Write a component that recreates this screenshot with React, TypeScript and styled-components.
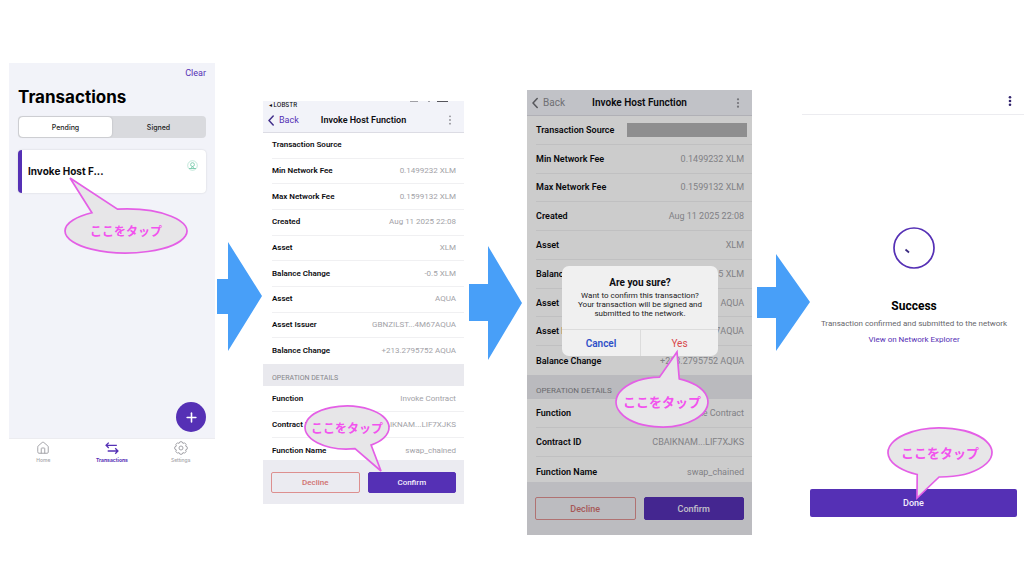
import React from "react";
import styled, { createGlobalStyle, css } from "styled-components";
import { House, Plus } from "lucide-react";

const purple = "#5530b5";
const ink = "#0c0c10";
const muted = "#a2a2a7";
const pink = "#e45fe6";

const GlobalStyle = createGlobalStyle`
  * { box-sizing: border-box; }
  body { margin: 0; background: #fff; color: ${ink}; font-family: Roboto, "Noto Sans CJK JP", sans-serif; }
  button { font: inherit; margin: 0; padding: 0; border: 0; background: none; color: inherit; white-space: nowrap; }
  a { color: inherit; text-decoration: none; }
  h1, h2, p, dl, dd, dt { margin: 0; }
  svg { display: block; }
`;

const Page = styled.main`
  display: grid;
  grid-template-columns:
    minmax(0, 206fr) minmax(0, 48fr) minmax(0, 201fr) minmax(0, 63fr)
    minmax(0, 225fr) minmax(0, 50fr) minmax(0, 222fr);
  align-items: start;
  min-height: 100vh;
  padding-left: 9px;
  overflow: hidden;
`;

const Screen = styled.section<{ $top: number }>`
  position: relative;
  display: flex;
  flex-direction: column;
  margin-top: ${(p) => p.$top}px;
`;

/* Arrows between the steps */
const ArrowSlot = styled.div<{ $top: number; $start: number }>`
  margin-top: ${(p) => p.$top}px;
  padding-left: ${(p) => p.$start}px;
`;

type ArrowProps = { top: number; start: number; w: number; h: number; neck: number; a: number; b: number; tip: number };
const Arrow = ({ top, start, w, h, neck, a, b, tip }: ArrowProps) => (
  <ArrowSlot $top={top} $start={start} aria-hidden="true">
    <svg width={w} height={h} overflow="visible">
      <path d={`M0 ${a}H${neck}V0L${w} ${tip}L${neck} ${h}V${b}H0Z`} fill="#489ff8" />
    </svg>
  </ArrowSlot>
);

/* Speech bubbles */
const CalloutBox = styled.div<{ $x: number; $y: number; $w: number; $h: number; $size: number }>`
  position: absolute;
  z-index: 3;
  left: ${(p) => p.$x}px;
  top: ${(p) => p.$y}px;
  width: ${(p) => p.$w}px;
  height: ${(p) => p.$h}px;
  display: flex;
  align-items: center;
  justify-content: center;
  font-family: "Noto Sans CJK JP", sans-serif;
  font-size: ${(p) => p.$size}px;
  font-weight: 700;
  line-height: 16px;
  color: #f253ee;
  white-space: nowrap;
  svg { position: absolute; left: 0; top: 0; overflow: visible; }
  span { position: relative; }
`;

/* The tail leaves the ellipse between two angles, given in degrees clockwise from the right. */
type CalloutProps = {
  x: number; y: number; w: number; h: number; size: number;
  open: [number, number];
  tip: [number, number];
};
const Callout = ({ x, y, w, h, size, open, tip }: CalloutProps) => {
  const rx = w / 2;
  const ry = h / 2;
  const at = (deg: number) => {
    const t = (deg * Math.PI) / 180;
    return `${(rx + rx * Math.cos(t)).toFixed(2)} ${(ry + ry * Math.sin(t)).toFixed(2)}`;
  };
  return (
    <CalloutBox $x={x} $y={y} $w={w} $h={h} $size={size}>
      <svg width={w} height={h} aria-hidden="true">
        <path
          d={`M${at(open[1])} A${rx} ${ry} 0 1 1 ${at(open[0])} L${tip[0]} ${tip[1]}Z`}
          fill="#e7e6e8"
          stroke={pink}
          strokeWidth="1.7"
        />
      </svg>
      <span>ここをタップ</span>
    </CalloutBox>
  );
};

/* Transactions list screen */
const ListBody = styled.div`
  display: flex;
  flex-direction: column;
  height: 375px;
  padding: 4px 9px 6px;
  background: #f2f3f9;
`;

const ClearButton = styled.button`
  align-self: flex-end;
  font-size: 9px;
  line-height: 12px;
  color: ${purple};
`;

const PageTitle = styled.h1`
  margin-top: 7px;
  font-family: Inter, sans-serif;
  font-size: 17px;
  line-height: 22px;
  font-weight: 700;
  color: #000;
`;

const Segments = styled.div`
  display: grid;
  grid-template-columns: 1fr 1fr;
  margin-top: 8px;
  height: 22px;
  padding: 1px;
  border-radius: 4px;
  background: #d9dade;
`;

const Segment = styled.button<{ $on?: boolean }>`
  font-family: Inter, sans-serif;
  font-size: 7px;
  font-weight: 500;
  border-radius: 4px;
  color: #222;
  ${(p) => p.$on && css`background: #fff; box-shadow: 0 0 2px rgba(0, 0, 0, 0.2);`}
`;

const Card = styled.a`
  display: flex;
  justify-content: space-between;
  margin-top: 12px;
  height: 43px;
  padding: 0 8px 0 6px;
  border-left: 4px solid ${purple};
  border-radius: 4px;
  background: #fff;
  box-shadow: 0 0 2px rgba(0, 0, 0, 0.15);
  font-family: Inter, sans-serif;
  font-size: 10px;
  line-height: 43px;
  font-weight: 700;
  svg { margin-top: 10px; }
`;

const AddButton = styled.button`
  display: grid;
  place-items: center;
  align-self: flex-end;
  margin-top: auto;
  width: 30px;
  height: 30px;
  border-radius: 50%;
  background: ${purple};
  color: #fff;
`;

const TabBar = styled.nav`
  display: grid;
  grid-template-columns: repeat(3, 1fr);
  border-top: 1px solid #ececf0;
  padding-top: 2px;
`;

const Tab = styled.a<{ $on?: boolean }>`
  display: flex;
  flex-direction: column;
  align-items: center;
  gap: 1px;
  font-family: Inter, sans-serif;
  font-size: 5px;
  line-height: 8px;
  font-weight: ${(p) => (p.$on ? 700 : 500)};
  color: ${(p) => (p.$on ? purple : "#a4a4a9")};
`;

/* Detail screens */
const StatusLine = styled.div`
  display: flex;
  justify-content: space-between;
  height: 7px;
  padding: 0 15px 0 6px;
  background: #f2f3f9;
  font-family: Inter, sans-serif;
  font-size: 6px;
  line-height: 7px;
  font-weight: 500;
`;

const NavBar = styled.header<{ $h: number }>`
  display: grid;
  grid-template-columns: 1fr auto 1fr;
  align-items: center;
  height: ${(p) => p.$h}px;
  padding: 0 5px;
  border-bottom: 1px solid #dcdce4;
  background: #f2f3f9;
`;

const NavTitle = styled.h2<{ $size: number }>`
  font-size: ${(p) => p.$size}px;
  line-height: 12px;
  font-weight: 600;
  white-space: nowrap;
`;

const BackButton = styled.button<{ $size: number; $dim?: boolean }>`
  display: flex;
  align-items: center;
  justify-self: start;
  gap: 5px;
  font-size: ${(p) => p.$size}px;
  line-height: 12px;
  color: ${(p) => (p.$dim ? "#8c8c92" : purple)};
  svg { color: ${(p) => (p.$dim ? "#6c6c72" : "#43308c")}; }
`;

const MoreButton = styled.button<{ $color: string }>`
  justify-self: end;
  margin-right: 7px;
  color: ${(p) => p.$color};
`;

const Rows = styled.dl<{ $h: number; $row?: number; $size: number }>`
  display: grid;
  grid-auto-rows: ${(p) => (p.$row ? `${p.$row}px` : "1fr")};
  height: ${(p) => p.$h}px;
  overflow: hidden;
  padding-left: 9px;
  background: #fff;
  font-size: ${(p) => p.$size}px;
`;

const Row = styled.div`
  display: flex;
  align-items: center;
  justify-content: space-between;
  padding-right: 8px;
  border-bottom: 1px solid #f0f0f2;
  line-height: 12px;
  white-space: nowrap;
  &:last-child { border-bottom: 0; }
  dt { font-weight: 600; }
  dd { color: ${muted}; }
`;

const Redacted = styled.dd`
  width: 120px;
  height: 14px;
  margin-right: -3px;
  background: #b2b2b3;
`;

const GroupTitle = styled.h2<{ $h: number; $size: number }>`
  height: ${(p) => p.$h}px;
  padding: ${(p) => p.$h - 14}px 9px 0;
  background: #e9e9ee;
  font-size: ${(p) => p.$size}px;
  line-height: 12px;
  font-weight: 400;
  color: #85858a;
`;

const Footer = styled.footer<{ $h: number; $top: number }>`
  display: grid;
  grid-template-columns: 1fr 1fr;
  align-items: start;
  gap: 8px;
  height: ${(p) => p.$h}px;
  padding: ${(p) => p.$top}px 8px 0;
  background: #ebebf1;
`;

const Action = styled.button<{ $h: number; $size: number; $primary?: boolean }>`
  height: ${(p) => p.$h}px;
  border: 1px solid ${(p) => (p.$primary ? purple : "#dd8f8f")};
  border-radius: 2px;
  background: ${(p) => (p.$primary ? purple : "transparent")};
  color: ${(p) => (p.$primary ? "#f3effc" : "#d0706f")};
  font-size: ${(p) => p.$size}px;
  font-weight: 500;
`;

const Shade = styled.div`
  position: absolute;
  z-index: 1;
  inset: 0;
  background: rgba(0, 0, 0, 0.2);
`;

const Alert = styled.div`
  position: absolute;
  z-index: 2;
  left: 35px;
  right: 34px;
  top: 176px;
  border-radius: 7px;
  background: #f0f0f0;
  text-align: center;
  overflow: hidden;
  h2 { padding-top: 11px; font-size: 10px; line-height: 12px; font-weight: 700; }
  p { padding: 2px 0 11px; font-size: 8px; line-height: 9px; white-space: pre-line; color: #222; }
`;

const AlertActions = styled.div`
  display: grid;
  grid-template-columns: 1fr 1fr;
  border-top: 1px solid #dcdcdc;
`;

const AlertButton = styled.button<{ $color: string; $weight: number }>`
  height: 26px;
  font-size: 10px;
  font-weight: ${(p) => p.$weight};
  color: ${(p) => p.$color};
  & + & { border-left: 1px solid #dcdcdc; }
`;

/* Success screen */
const PlainBar = styled.header`
  display: flex;
  align-items: center;
  justify-content: flex-end;
  height: 27px;
  padding-right: 5px;
  border-bottom: 1px solid #ececf0;
`;

const Result = styled.div`
  display: flex;
  flex-direction: column;
  align-items: center;
  padding: 112px 0 0 2px;
  text-align: center;
  h2 { margin-top: 29px; font-size: 12px; line-height: 16px; font-weight: 700; color: #000; }
  p { margin-top: 4px; font-size: 8px; line-height: 12px; color: #66666b; white-space: nowrap; }
  a { margin-top: 4px; font-size: 8px; line-height: 12px; color: ${purple}; }
`;

const DoneButton = styled.button`
  margin: 143px 7px 0 8px;
  height: 28px;
  border-radius: 2px;
  background: ${purple};
  color: #f3effc;
  font-size: 9px;
  font-weight: 500;
`;

const Dots = ({ r = 0.9 }: { r?: number }) => (
  <svg width="4" height="12" viewBox="0 0 4 12" fill="currentColor" aria-hidden="true">
    <circle cx="2" cy="2.3" r={r} />
    <circle cx="2" cy="6" r={r} />
    <circle cx="2" cy="9.7" r={r} />
  </svg>
);

const BackIcon = ({ height }: { height: number }) => (
  <svg width="6" height={height} viewBox="0 0 6 11" fill="none" stroke="currentColor" strokeWidth="1.5" strokeLinecap="round" strokeLinejoin="round" aria-hidden="true">
    <path d="M5.2 1L1 5.5L5.2 10" />
  </svg>
);

const TransferIcon = () => (
  <svg width="14" height="14" viewBox="0 0 13 13" fill="none" stroke="currentColor" strokeWidth="1.2" aria-hidden="true">
    <path d="M3.5 1.5L1 4L3.5 6.5M1 4H11M9.5 6.8L12 9.3L9.5 11.8M12 9.3H2.5" />
  </svg>
);

/* A round gear with eight shallow teeth */
const gearPath =
  Array.from({ length: 8 }, (_, i) => {
    const point = (step: number, r: number) => {
      const t = ((i + step) * Math.PI) / 4;
      return `${(7 + r * Math.cos(t)).toFixed(2)} ${(7 + r * Math.sin(t)).toFixed(2)}`;
    };
    return `${i === 0 ? "M" : "L"}${point(-0.22, 6.3)}L${point(0.22, 6.3)}L${point(0.5, 5)}`;
  }).join("") + "Z";

const GearIcon = () => (
  <svg width="14" height="14" viewBox="0 0 14 14" fill="none" stroke="currentColor" strokeWidth="1" strokeLinejoin="round" aria-hidden="true">
    <path d={gearPath} />
    <circle cx="7" cy="7" r="2" />
  </svg>
);

const BadgeIcon = () => (
  <svg width="11" height="11" viewBox="0 0 11 11" fill="none" stroke="#6cc5a4" strokeWidth="0.8" aria-hidden="true">
    <circle cx="5.5" cy="5.5" r="4.8" strokeOpacity="0.5" />
    <circle cx="5.5" cy="4.6" r="1.9" />
    <path d="M3.5 9L5.5 6.5L7.5 9M2 8.5H9" />
  </svg>
);

const details: [string, string][] = [
  ["Min Network Fee", "0.1499232 XLM"],
  ["Max Network Fee", "0.1599132 XLM"],
  ["Created", "Aug 11 2025 22:08"],
  ["Asset", "XLM"],
  ["Balance Change", "-0.5 XLM"],
  ["Asset", "AQUA"],
  ["Asset Issuer", "GBNZILST...4M67AQUA"],
  ["Balance Change", "+213.2795752 AQUA"],
];

const operation: [string, string][] = [
  ["Function", "Invoke Contract"],
  ["Contract ID", "CBAIKNAM...LIF7XJKS"],
  ["Function Name", "swap_chained"],
];

const DetailRows = ({ items }: { items: [string, string][] }) => (
  <>
    {items.map(([label, value], i) => (
      <Row key={i}>
        <dt>{label}</dt>
        <dd>{value}</dd>
      </Row>
    ))}
  </>
);

export default function App() {
  return (
    <>
      <GlobalStyle />
      <Page>
        <Screen $top={63}>
          <ListBody>
            <ClearButton>Clear</ClearButton>
            <PageTitle>Transactions</PageTitle>
            <Segments>
              <Segment $on>Pending</Segment>
              <Segment>Signed</Segment>
            </Segments>
            <Card href="#details">
              Invoke Host F...
              <BadgeIcon />
            </Card>
            <AddButton aria-label="Add">
              <Plus size={15} strokeWidth={2.5} />
            </AddButton>
          </ListBody>
          <TabBar>
            <Tab href="#home"><House size={14} strokeWidth={1.7} />Home</Tab>
            <Tab href="#transactions" $on><TransferIcon />Transactions</Tab>
            <Tab href="#settings"><GearIcon />Settings</Tab>
          </TabBar>
          <Callout x={56} y={146} w={122} h={44} size={12} open={[236, 262]} tip={[5, -31]} />
        </Screen>

        <Arrow top={242} start={2} w={45} h={109} neck={11} a={37} b={72} tip={54} />

        <Screen $top={101}>
          <StatusLine>
            <span>◂ LOBSTR</span>
            <svg width="40" height="2" aria-hidden="true">
              <path d="M1 0.5H9M19 0.5H21" stroke="#a0a0a6" />
              <path d="M28 0.5H39" stroke="#55555c" />
            </svg>
          </StatusLine>
          <NavBar $h={25}>
            <BackButton $size={9}><BackIcon height={11} />Back</BackButton>
            <NavTitle $size={9}>Invoke Host Function</NavTitle>
            <MoreButton $color="#8f8f96" aria-label="More"><Dots /></MoreButton>
          </NavBar>
          <Rows $h={231} $size={8}>
            <Row><dt>Transaction Source</dt><dd /></Row>
            <DetailRows items={details} />
          </Rows>
          <GroupTitle $h={22} $size={7}>OPERATION DETAILS</GroupTitle>
          <Rows $h={74} $row={26} $size={8}>
            <DetailRows items={operation} />
          </Rows>
          <Footer $h={44} $top={12}>
            <Action $h={21} $size={8}>Decline</Action>
            <Action $h={21} $size={8} $primary>Confirm</Action>
          </Footer>
          <Callout x={42} y={305} w={84} h={43} size={12} open={[55, 79]} tip={[76, 65]} />
        </Screen>

        <Arrow top={246} start={5} w={53} h={114} neck={19} a={38} b={75} tip={57} />

        <Screen $top={90}>
          <NavBar $h={26}>
            <BackButton $size={10} $dim><BackIcon height={12} />Back</BackButton>
            <NavTitle $size={10}>Invoke Host Function</NavTitle>
            <MoreButton $color="#8f8f96" aria-label="More"><Dots r={1.1} /></MoreButton>
          </NavBar>
          <Rows $h={259} $size={9}>
            <Row><dt>Transaction Source</dt><Redacted /></Row>
            <DetailRows items={details} />
          </Rows>
          <GroupTitle $h={24} $size={8}>OPERATION DETAILS</GroupTitle>
          <Rows $h={83} $row={29} $size={9}>
            <DetailRows items={operation} />
          </Rows>
          <Footer $h={53} $top={15}>
            <Action $h={23} $size={9}>Decline</Action>
            <Action $h={23} $size={9} $primary>Confirm</Action>
          </Footer>
          <Shade />
          <Alert role="alertdialog" aria-label="Are you sure?">
            <h2>Are you sure?</h2>
            <p>{"Want to confirm this transaction?\nYour transaction will be signed and\nsubmitted to the network."}</p>
            <AlertActions>
              <AlertButton $color="#2f50c8" $weight={600}>Cancel</AlertButton>
              <AlertButton $color="#d8474b" $weight={400}>Yes</AlertButton>
            </AlertActions>
          </Alert>
          <Callout x={89} y={287} w={92} h={50} size={13} open={[267, 292]} tip={[61, -25]} />
        </Screen>

        <Arrow top={254} start={5} w={53} h={97} neck={19} a={33} b={64} tip={48} />

        <Screen $top={88}>
          <PlainBar>
            <MoreButton $color="#33256e" aria-label="More"><Dots r={1.3} /></MoreButton>
          </PlainBar>
          <Result>
            <svg width="42" height="42" viewBox="0 0 42 42" fill="none" stroke={purple} aria-hidden="true">
              <circle cx="21" cy="21" r="20" strokeWidth="1.7" />
              <path d="M12.5 22.5L16 25.5" strokeWidth="1.7" stroke="#3a2a80" />
            </svg>
            <h2>Success</h2>
            <p>Transaction confirmed and submitted to the network</p>
            <a href="#explorer">View on Network Explorer</a>
          </Result>
          <DoneButton>Done</DoneButton>
          <Callout x={86} y={340} w={104} h={49} size={13} open={[91, 116]} tip={[29, 70]} />
        </Screen>
      </Page>
    </>
  );
}
